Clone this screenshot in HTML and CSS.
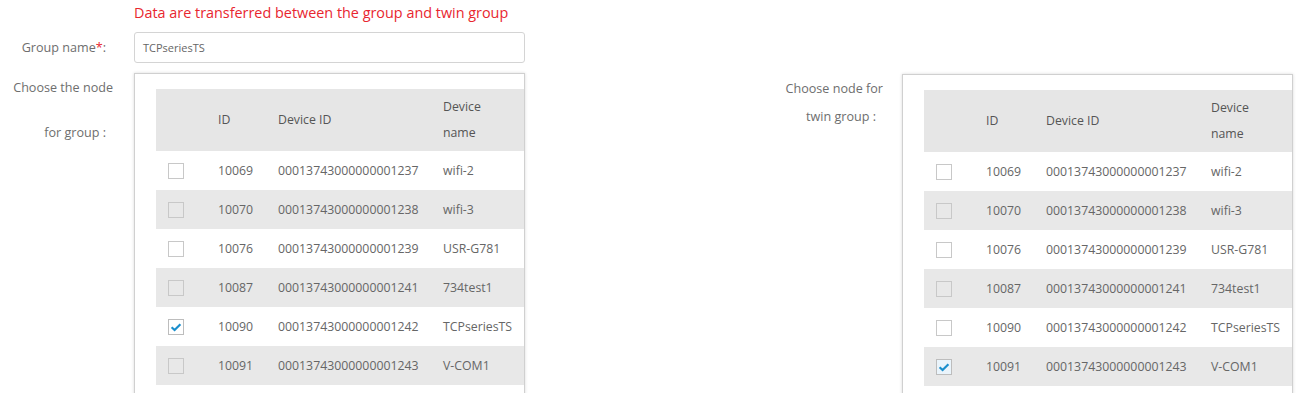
FILE: index.html
```html
<!DOCTYPE html>
<html>
<head>
<meta charset="utf-8">
<link rel="stylesheet" href="styles.css">
</head>
<body>
<div class="page">
  <div class="notice">Data are transferred between the group and twin group</div>
  <div class="name-row">
    <label class="label name-label">Group name<span class="req">*</span>:</label>
    <div class="input">TCPseriesTS</div>
  </div>
  <div class="nodes">
    <div class="node-block">
      <div class="label node-label left-label">Choose the node<br><span class="l2">for group :</span></div>
      <div class="box">
        <table class="grid">
          <thead>
            <tr><th class="c-chk"></th><th class="c-id">ID</th><th class="c-dev">Device ID</th><th class="c-name">Device<br>name</th></tr>
          </thead>
          <tbody>
            <tr><td><span class="chk"></span></td><td>10069</td><td>00013743000000001237</td><td>wifi-2</td></tr>
            <tr><td><span class="chk"></span></td><td>10070</td><td>00013743000000001238</td><td>wifi-3</td></tr>
            <tr><td><span class="chk"></span></td><td>10076</td><td>00013743000000001239</td><td>USR-G781</td></tr>
            <tr><td><span class="chk"></span></td><td>10087</td><td>00013743000000001241</td><td>734test1</td></tr>
            <tr><td><span class="chk on"><svg viewBox="0 0 16 16" width="16" height="16"><path d="M3.6 8.2 L6.6 11 L12.4 5.2" fill="none" stroke="#1b8fcd" stroke-width="2.2"/></svg></span></td><td>10090</td><td>00013743000000001242</td><td>TCPseriesTS</td></tr>
            <tr><td><span class="chk"></span></td><td>10091</td><td>00013743000000001243</td><td>V-COM1</td></tr>
          </tbody>
        </table>
      </div>
    </div>
    <div class="node-block twin">
      <div class="label node-label right-label">Choose node for<br><span class="l2">twin group :</span></div>
      <div class="box">
        <table class="grid">
          <thead>
            <tr><th class="c-chk"></th><th class="c-id">ID</th><th class="c-dev">Device ID</th><th class="c-name">Device<br>name</th></tr>
          </thead>
          <tbody>
            <tr><td><span class="chk"></span></td><td>10069</td><td>00013743000000001237</td><td>wifi-2</td></tr>
            <tr><td><span class="chk"></span></td><td>10070</td><td>00013743000000001238</td><td>wifi-3</td></tr>
            <tr><td><span class="chk"></span></td><td>10076</td><td>00013743000000001239</td><td>USR-G781</td></tr>
            <tr><td><span class="chk"></span></td><td>10087</td><td>00013743000000001241</td><td>734test1</td></tr>
            <tr><td><span class="chk"></span></td><td>10090</td><td>00013743000000001242</td><td>TCPseriesTS</td></tr>
            <tr><td><span class="chk on"><svg viewBox="0 0 16 16" width="16" height="16"><path d="M3.6 8.2 L6.6 11 L12.4 5.2" fill="none" stroke="#1b8fcd" stroke-width="2.2"/></svg></span></td><td>10091</td><td>00013743000000001243</td><td>V-COM1</td></tr>
          </tbody>
        </table>
      </div>
    </div>
  </div>
</div>
</body>
</html>
```
FILE: styles.css
```css
html, body {
  margin: 0;
  padding: 0;
  background: #fff;
  overflow: hidden;
  height: 393px;
}
.page {
  font-family: "Open Sans", "Liberation Sans", sans-serif;
  color: #666;
  font-size: 12px;
}
.notice {
  color: #e8262f;
  font-size: 14.4px;
  line-height: 20px;
  padding: 3px 0 0 134px;
  height: 28px;
  box-sizing: border-box;
}
.name-row {
  display: flex;
  align-items: center;
  margin-top: 4px;
}
.label {
  color: #6e6e6e;
  font-size: 12.6px;
  text-align: right;
  box-sizing: border-box;
}
.name-label {
  width: 114px;
  padding-right: 8px;
  margin-right: 20px;
}
.req { color: #e8262f; }
.input {
  width: 391px;
  height: 31px;
  box-sizing: border-box;
  border: 1px solid #d4d4d4;
  border-radius: 3px;
  padding: 0 8px;
  line-height: 29px;
  font-size: 11px;
  color: #666;
}
.nodes {
  display: flex;
  margin-top: 10px;
}
.node-block {
  display: flex;
  align-items: flex-start;
}
.node-block.twin {
  margin-left: 234px;
  margin-top: 1px;
}
.node-label {
  width: 113px;
  margin-right: 21px;
}
.l2 { padding-right: 7px; }
.left-label {
  line-height: 45px;
  margin-top: -8px;
}
.right-label {
  line-height: 28px;
  margin-top: 1px;
}
.twin .node-label { width: 124px; margin-right: 19px; }
.box {
  width: 391px;
  height: 340px;
  box-sizing: border-box;
  border: 1px solid #d0d0d0;
  box-shadow: 0 0 3px rgba(0,0,0,0.15);
  padding: 15px 0 0 21px;
  overflow: hidden;
}
.grid {
  border-collapse: collapse;
  table-layout: fixed;
  width: 368px;
  font-size: 12.3px;
  color: #666;
}
.grid th {
  background: #e6e6e6;
  font-weight: normal;
  text-align: left;
  color: #555;
  height: 62px;
  line-height: 26px;
  padding: 0 0 0 12px;
}
.grid td {
  height: 39px;
  padding: 0 0 0 12px;
  white-space: nowrap;
}
.grid tbody tr:nth-child(even) td { background: #e8e8e8; }
.c-chk { width: 38px; }
.c-id { width: 48px; }
.c-dev { width: 153px; }
.chk {
  display: block;
  width: 16px;
  height: 16px;
  box-sizing: border-box;
  border: 1px solid #c8c8c8;
  background: transparent;
  position: relative;
}
.chk svg {
  position: absolute;
  left: -1px;
  top: -1px;
}
.chk.on { background: #fff; border-color: #bdbdbd; }
.grid tbody tr:nth-child(even) .chk.on { background: #eaf4fb; }
```
